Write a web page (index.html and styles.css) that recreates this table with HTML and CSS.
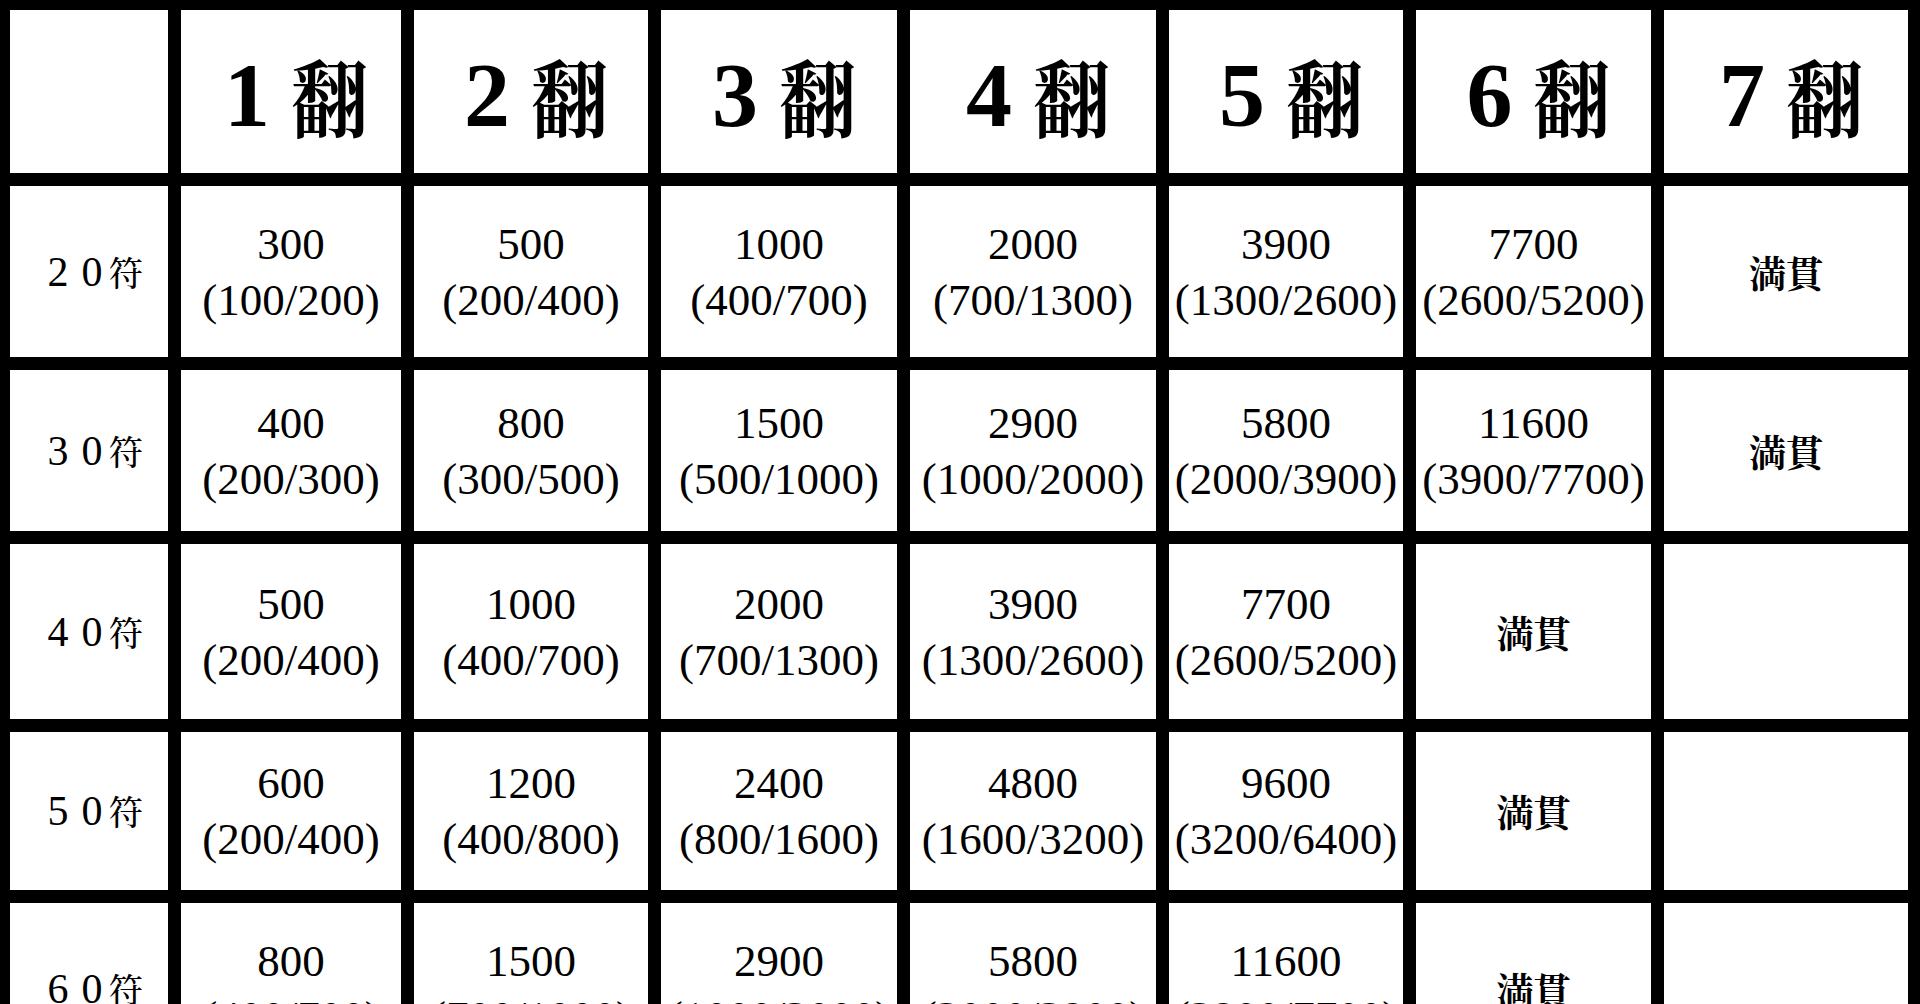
FILE: index.html
```html
<!DOCTYPE html>
<html lang="ja">
<head>
<meta charset="utf-8">
<title>点数表</title>
<link rel="stylesheet" href="styles.css">
</head>
<body>
<div class="table">
  <div class="cell"></div>
  <div class="cell head"><span class="hn">1</span><span class="hk">翻</span></div>
  <div class="cell head"><span class="hn">2</span><span class="hk">翻</span></div>
  <div class="cell head"><span class="hn">3</span><span class="hk">翻</span></div>
  <div class="cell head"><span class="hn">4</span><span class="hk">翻</span></div>
  <div class="cell head"><span class="hn">5</span><span class="hk">翻</span></div>
  <div class="cell head"><span class="hn">6</span><span class="hk">翻</span></div>
  <div class="cell head"><span class="hn">7</span><span class="hk">翻</span></div>

  <div class="cell label"><span class="fw">2</span><span class="fw">0</span><span class="fu">符</span></div>
  <div class="cell val"><span>300</span><span>(100/200)</span></div>
  <div class="cell val"><span>500</span><span>(200/400)</span></div>
  <div class="cell val"><span>1000</span><span>(400/700)</span></div>
  <div class="cell val"><span>2000</span><span>(700/1300)</span></div>
  <div class="cell val"><span>3900</span><span>(1300/2600)</span></div>
  <div class="cell val"><span>7700</span><span>(2600/5200)</span></div>
  <div class="cell mangan">満貫</div>

  <div class="cell label"><span class="fw">3</span><span class="fw">0</span><span class="fu">符</span></div>
  <div class="cell val"><span>400</span><span>(200/300)</span></div>
  <div class="cell val"><span>800</span><span>(300/500)</span></div>
  <div class="cell val"><span>1500</span><span>(500/1000)</span></div>
  <div class="cell val"><span>2900</span><span>(1000/2000)</span></div>
  <div class="cell val"><span>5800</span><span>(2000/3900)</span></div>
  <div class="cell val"><span>11600</span><span>(3900/7700)</span></div>
  <div class="cell mangan">満貫</div>

  <div class="cell label"><span class="fw">4</span><span class="fw">0</span><span class="fu">符</span></div>
  <div class="cell val"><span>500</span><span>(200/400)</span></div>
  <div class="cell val"><span>1000</span><span>(400/700)</span></div>
  <div class="cell val"><span>2000</span><span>(700/1300)</span></div>
  <div class="cell val"><span>3900</span><span>(1300/2600)</span></div>
  <div class="cell val"><span>7700</span><span>(2600/5200)</span></div>
  <div class="cell mangan">満貫</div>
  <div class="cell"></div>

  <div class="cell label"><span class="fw">5</span><span class="fw">0</span><span class="fu">符</span></div>
  <div class="cell val"><span>600</span><span>(200/400)</span></div>
  <div class="cell val"><span>1200</span><span>(400/800)</span></div>
  <div class="cell val"><span>2400</span><span>(800/1600)</span></div>
  <div class="cell val"><span>4800</span><span>(1600/3200)</span></div>
  <div class="cell val"><span>9600</span><span>(3200/6400)</span></div>
  <div class="cell mangan">満貫</div>
  <div class="cell"></div>

  <div class="cell label"><span class="fw">6</span><span class="fw">0</span><span class="fu">符</span></div>
  <div class="cell val"><span>800</span><span>(400/700)</span></div>
  <div class="cell val"><span>1500</span><span>(700/1000)</span></div>
  <div class="cell val"><span>2900</span><span>(1000/2000)</span></div>
  <div class="cell val"><span>5800</span><span>(2000/3900)</span></div>
  <div class="cell val"><span>11600</span><span>(3900/7700)</span></div>
  <div class="cell mangan">満貫</div>
  <div class="cell"></div>
</div>
</body>
</html>
```
FILE: styles.css
```css
html, body {
  margin: 0;
  padding: 0;
  background: #000;
  overflow: hidden;
  height: 1004px;
}

.table {
  display: grid;
  grid-template-columns: 158px 220px 234px 236px 246px 234px 235px 244px;
  grid-template-rows: 163px 171px 161px 175px 158px 172px;
  gap: 13px;
  padding: 10px 12px 10px 10px;
  background: #000;
  width: max-content;
}

.cell {
  background: #fff;
  color: #000;
  display: flex;
  align-items: center;
  justify-content: center;
}

.head {
  padding-top: 6px;
  padding-left: 14px;
  box-sizing: border-box;
}

.hn {
  font-family: "Liberation Serif", "Times New Roman", serif;
  font-weight: bold;
  font-size: 92px;
  line-height: 1;
  margin-right: 18px;
}

.hk {
  font-family: "Noto Serif CJK JP", "Noto Sans CJK JP", serif;
  font-weight: 700;
  font-size: 84px;
  line-height: 1;
  display: inline-block;
  transform: scaleX(0.92);
}

.val {
  flex-direction: column;
  font-family: "Liberation Serif", "Times New Roman", serif;
  font-size: 45px;
  line-height: 56px;
  white-space: nowrap;
}

.label {
  font-family: "Liberation Serif", "Times New Roman", serif;
  font-size: 36px;
  line-height: 1;
  padding-left: 6px;
  box-sizing: border-box;
}

.fw {
  display: inline-block;
  width: 34px;
  text-align: center;
  font-size: 42px;
}

.fu {
  font-family: "Noto Serif CJK JP", "Noto Sans CJK JP", serif;
  font-size: 34px;
  font-weight: 500;
}

.mangan {
  font-family: "Noto Serif CJK JP", "Noto Sans CJK JP", serif;
  font-size: 37px;
  font-weight: 700;
}
```
